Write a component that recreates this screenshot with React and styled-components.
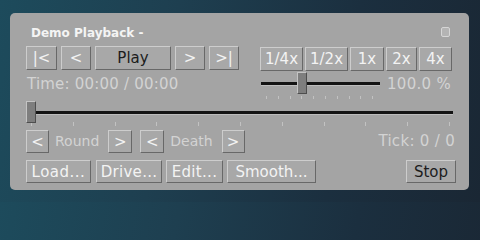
import styled, { createGlobalStyle } from "styled-components";

const Global = createGlobalStyle`
  html, body {
    margin: 0;
    padding: 0;
  }
  body {
    width: 480px;
    height: 202px;
    overflow: hidden;
    background: linear-gradient(100deg, #1d4b5c 0%, #1e3f50 35%, #1b2f3f 70%, #1a2734 100%);
    font-family: "DejaVu Sans", "Liberation Sans", sans-serif;
  }
`;

const Panel = styled.div`
  box-sizing: border-box;
  margin: 13px 0 0 10px;
  width: 459px;
  height: 177px;
  padding: 12px 13px 0 16px;
  background: #a4a4a4;
  border-radius: 5px;
  display: flex;
  flex-direction: column;
`;

const Header = styled.div`
  height: 21px;
  display: flex;
  justify-content: space-between;
  align-items: flex-start;
`;

const Title = styled.div`
  margin-left: 5px;
  font-size: 12px;
  font-weight: bold;
  line-height: 16px;
  color: #f4f4f4;
`;

const Restore = styled.div`
  margin: 2px 6px 0 0;
  width: 7px;
  height: 8px;
  border: 1px solid #d6d6d6;
  border-radius: 2px;
  background: #b4b4b4;
`;

const Grid = styled.div`
  display: grid;
  grid-template-columns: 213px 1fr;
  column-gap: 21px;
  height: ${(p) => p.$h}px;
  align-items: ${(p) => p.$align || "start"};
`;

const Group = styled.div`
  display: flex;
  gap: ${(p) => p.$gap}px;
  align-items: center;
`;

const Btn = styled.button`
  box-sizing: border-box;
  width: ${(p) => p.$w}px;
  height: ${(p) => p.$h || 24}px;
  margin: ${(p) => p.$m || "0"};
  padding: 0;
  background: #a8a8a8;
  border: 1px solid;
  border-color: #cdcdcd #686868 #686868 #cdcdcd;
  font-family: "DejaVu Sans", "Liberation Sans", sans-serif;
  font-size: 15px;
  letter-spacing: ${(p) => p.$ls || 0}px;
  color: ${(p) => (p.$dark ? "#1c1c1c" : "#f3f3f3")};
  white-space: nowrap;
  cursor: default;
`;

const Info = styled.div`
  font-size: ${(p) => p.$size || 15}px;
  letter-spacing: ${(p) => p.$ls || 0}px;
  line-height: ${(p) => p.$lh || 28}px;
  color: #d3d3d3;
  margin: ${(p) => p.$m || "0"};
  white-space: nowrap;
`;

const SliderBox = styled.div`
  position: relative;
  width: ${(p) => p.$w}px;
  height: ${(p) => p.$h}px;
  margin: ${(p) => p.$m || "0"};
`;

const Track = styled.div`
  margin-top: ${(p) => p.$top}px;
  height: 3px;
  background: #141414;
  border-bottom: 1px solid #bdbdbd;
`;

const Ticks = styled.div`
  margin: ${(p) => p.$gap}px 0 0 ${(p) => p.$start}px;
  height: ${(p) => p.$th}px;
  background: repeating-linear-gradient(
    90deg,
    #c2c2c2 0,
    #c2c2c2 1px,
    transparent 1px,
    transparent ${(p) => p.$step}px
  );
`;

const Thumb = styled.div`
  position: absolute;
  top: ${(p) => p.$top}px;
  box-sizing: border-box;
  width: 10px;
  height: 22px;
  background: #7e7e7e;
  border: 1px solid;
  border-color: #c4c4c4 #4e4e4e #4e4e4e #c4c4c4;
`;

const Row = styled.div`
  display: flex;
  align-items: center;
  height: 23px;
  margin-top: ${(p) => p.$mt}px;
`;

const Spacer = styled.div`
  flex: 1;
`;

function Slider({ w, h, m, value, trackTop, thumbTop, tickGap, tickStart, tickStep, tickH }) {
  const left = Math.round((w - 10) * value);
  return (
    <SliderBox $w={w} $h={h} $m={m}>
      <Track $top={trackTop} />
      <Ticks $gap={tickGap} $start={tickStart} $step={tickStep} $th={tickH} />
      <Thumb $top={thumbTop} style={{ left }} />
    </SliderBox>
  );
}

const speeds = [
  ["1/4x", 43],
  ["1/2x", 43],
  ["1x", 34],
  ["2x", 31],
  ["4x", 33],
];

export default function App() {
  return (
    <>
      <Global />
      <Panel>
        <Header>
          <Title>Demo Playback -</Title>
          <Restore />
        </Header>

        <Grid $h={24}>
          <Group $gap={4}>
            <Btn $w={31}>|&lt;</Btn>
            <Btn $w={30}>&lt;</Btn>
            <Btn $w={76} $dark>Play</Btn>
            <Btn $w={30}>&gt;</Btn>
            <Btn $w={30}>&gt;|</Btn>
          </Group>
          <Group $gap={2}>
            {speeds.map(([label, w]) => (
              <Btn key={label} $w={w} $m="1px 0 0 0">
                {label}
              </Btn>
            ))}
          </Group>
        </Grid>

        <Grid $h={28}>
          <Info $ls={0.2} $m="0 0 0 1px">Time: 00:00 / 00:00</Info>
          <Group $gap={0}>
            <Slider
              w={119}
              h={28}
              m="0 0 0 1px"
              value={0.33}
              trackTop={12}
              thumbTop={2}
              tickGap={10}
              tickStart={5}
              tickStep={11.8}
              tickH={3}
            />
            <Info $m="0 0 0 7px" $ls={0.3}>100.0 %</Info>
          </Group>
        </Grid>

        <Slider
          w={427}
          h={27}
          m="2px 0 0 0"
          value={0}
          trackTop={11}
          thumbTop={1}
          tickGap={7}
          tickStart={5}
          tickStep={41.8}
          tickH={4}
        />

        <Row $mt={3}>
          <Btn $w={23} $h={23}>&lt;</Btn>
          <Info $size={14} $lh={23} $m="0 9px 0 6px">Round</Info>
          <Btn $w={24} $h={23}>&gt;</Btn>
          <Btn $w={24} $h={23} $m="0 0 0 8px">&lt;</Btn>
          <Info $size={14} $lh={23} $m="0 9px 0 6px">Death</Info>
          <Btn $w={23} $h={23}>&gt;</Btn>
          <Spacer />
          <Info $lh={23} $ls={0.3} $m="0 1px 0 0">Tick: 0 / 0</Info>
        </Row>

        <Row $mt={7}>
          <Btn $w={65} $h={23} $ls={0.5}>Load...</Btn>
          <Btn $w={66} $h={23} $m="0 0 0 5px" $ls={0.3}>Drive...</Btn>
          <Btn $w={57} $h={23} $m="0 0 0 4px" $ls={0.3}>Edit...</Btn>
          <Btn $w={89} $h={23} $m="0 0 0 4px">Smooth...</Btn>
          <Spacer />
          <Btn $w={50} $h={23} $dark>Stop</Btn>
        </Row>
      </Panel>
    </>
  );
}
